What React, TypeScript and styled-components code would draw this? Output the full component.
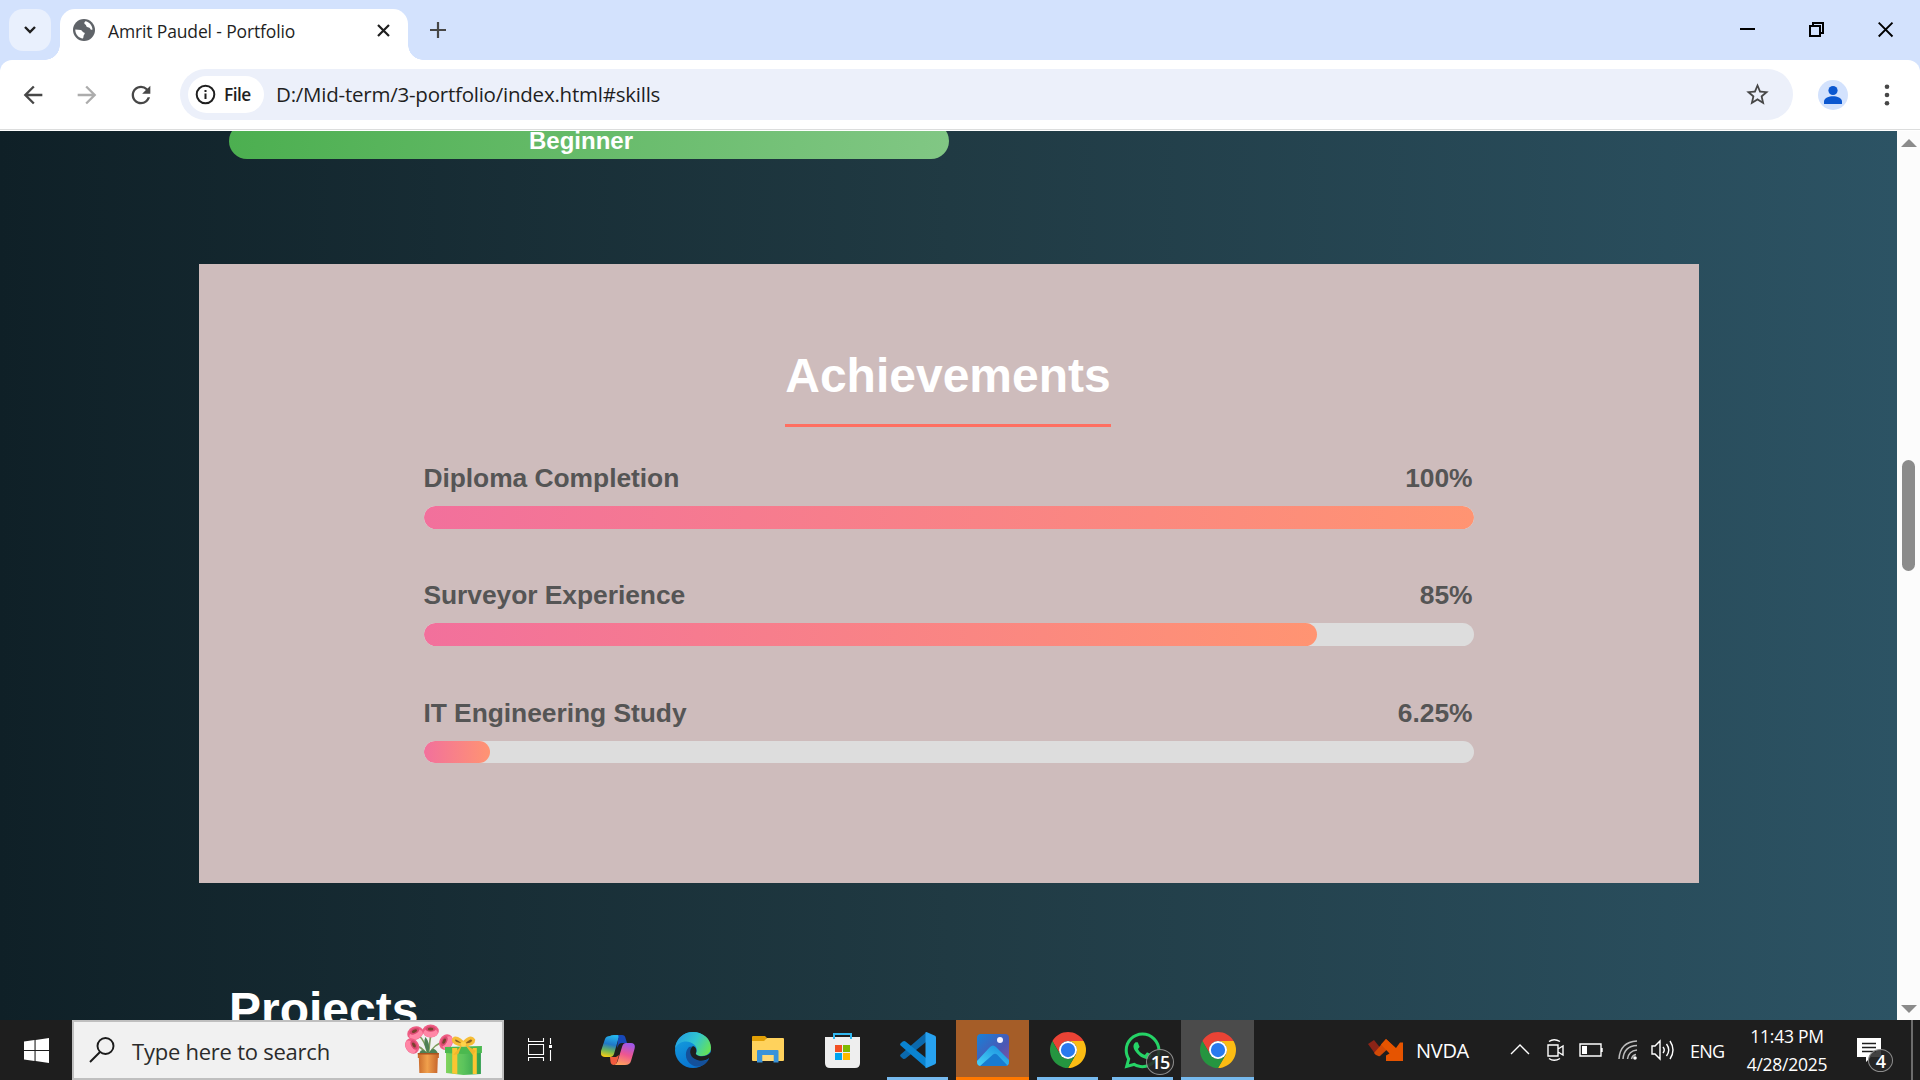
import React from "react";
import styled, { createGlobalStyle, css } from "styled-components";
import { MdArrowBack, MdArrowForward, MdRefresh, MdStarBorder } from "react-icons/md";
import { FaWhatsapp } from "react-icons/fa";

const GlobalStyle = createGlobalStyle`
  * { box-sizing: border-box; }
  html, body { margin: 0; padding: 0; }
  body { overflow: hidden; background: #1e1e1e; }
  svg { display: block; flex: none; }
`;

const ui = `"Segoe UI", "Open Sans", "Noto Sans", sans-serif`;
const arial = `Arial, "Liberation Sans", sans-serif`;

const Screen = styled.div`
  width: 1920px;
  height: 1080px;
  display: flex;
  flex-direction: column;
  overflow: hidden;
  font-family: ${ui};
`;

/* ---------- browser chrome ---------- */

const TabStrip = styled.header`
  height: 60px;
  flex: none;
  display: flex;
  background: #d3e2fd;
  padding: 9px 0 0 9px;
`;

const TabSearch = styled.button`
  width: 42px;
  height: 42px;
  border: 0;
  padding: 0;
  border-radius: 14px;
  background: #e9f0fd;
  display: grid;
  place-items: center;
`;

const Tab = styled.div`
  position: relative;
  width: 348px;
  height: 51px;
  margin-left: 9px;
  padding: 0 18px 9px 13px;
  display: flex;
  align-items: center;
  background: #fff;
  border-radius: 15px 15px 0 0;
  &::before,
  &::after {
    content: "";
    position: absolute;
    bottom: 0;
    width: 15px;
    height: 15px;
  }
  &::before {
    left: -15px;
    background: radial-gradient(circle at 0 0, transparent 14.5px, #fff 15px);
  }
  &::after {
    right: -15px;
    background: radial-gradient(circle at 100% 0, transparent 14.5px, #fff 15px);
  }
`;

const TabTitle = styled.span`
  flex: 1;
  margin-left: 13px;
  padding-top: 2px;
  font-size: 17.5px;
  line-height: 24px;
  letter-spacing: -0.14px;
  color: #1f1f1f;
  white-space: nowrap;
`;

const NewTab = styled.div`
  width: 60px;
  height: 42px;
  display: grid;
  place-items: center;
`;

const WindowControls = styled.div`
  margin-left: auto;
  padding: 13px 26px 0 0;
  display: flex;
  gap: 53px;
`;

const ToolbarBack = styled.div`
  height: 71px;
  flex: none;
  background: #d3e2fd;
`;

const Toolbar = styled.nav`
  height: 71px;
  padding: 9px 24px 11px 19px;
  display: flex;
  align-items: center;
  background: #fff;
  border-radius: 12px 12px 0 0;
  box-shadow: inset 0 -1px #fff, inset 0 -2px #dcdddd;
  color: #474747;
`;

const NavButtons = styled.div`
  width: 161px;
  flex: none;
  display: flex;
  gap: 26px;
  svg:nth-child(2) { color: #acacac; }
`;

const AddressBar = styled.div`
  width: 1613px;
  height: 51px;
  flex: none;
  padding: 0 22px 0 8px;
  display: flex;
  align-items: center;
  border-radius: 26px;
  background: #ecf0fa;
`;

const SiteChip = styled.div`
  width: 76px;
  height: 37px;
  padding-left: 7px;
  display: flex;
  align-items: center;
  gap: 8px;
  border-radius: 19px;
  background: #fff;
  color: #1f1f1f;
  font-size: 17.3px;
  font-weight: 600;
  letter-spacing: -0.55px;
`;

const Url = styled.span`
  flex: 1;
  margin: -2px 0 0 12px;
  font-size: 20.5px;
  line-height: 28px;
  letter-spacing: -0.23px;
  color: #1f1f1f;
`;

const Avatar = styled.div`
  width: 30px;
  height: 30px;
  margin: 0 auto 0 25px;
  border-radius: 50%;
  background: #d3e2fd;
`;

/* ---------- web page ---------- */

const Viewport = styled.main`
  height: 889px;
  flex: none;
  display: flex;
`;

const Page = styled.div`
  width: 1897px;
  height: 889px;
  overflow: hidden;
  display: flex;
  flex-direction: column;
  background: linear-gradient(90deg, #0f2027, #203a43, #2c5364);
  font-family: ${arial};
`;

const SkillBar = styled.div`
  width: 720px;
  height: 36px;
  flex: none;
  margin: -8px 0 0 229px;
  padding-right: 16px;
  border-radius: 18px;
  background: linear-gradient(90deg, #4caf50, #81c784);
  color: #fff;
  font-size: 24px;
  font-weight: 700;
  line-height: 36px;
  text-align: center;
`;

const Card = styled.section`
  width: 1500px;
  height: 619px;
  flex: none;
  margin: 105px 0 0 199px;
  padding: 84px 225px 0;
  display: flex;
  flex-direction: column;
  background: #cebcbc;
`;

const Heading = styled.h2`
  margin: 0;
  color: #fff;
  font-size: 48px;
  font-weight: 700;
  line-height: 55px;
`;

const CardHeading = styled(Heading)`
  height: 79px;
  align-self: center;
  margin-right: 2px;
  border-bottom: 3px solid #ff6f61;
`;

const ProgressList = styled.div`
  margin-top: 36px;
  display: flex;
  flex-direction: column;
`;

const ProgressItem = styled.div`
  height: 117.3px;
`;

const ProgressLabel = styled.div`
  display: flex;
  justify-content: space-between;
  height: 43px;
  padding-right: 1.5px;
  color: #555;
  font-size: 26.4px;
  font-weight: 700;
  line-height: 30px;
  letter-spacing: -0.04px;
  text-indent: -0.6px;
`;

const Track = styled.div`
  height: 22.5px;
  border-radius: 15px;
  overflow: hidden;
  background: #ddd;
`;

const Fill = styled.div`
  height: 100%;
  border-radius: 15px;
  background: linear-gradient(90deg, #f2709c, #ff9472);
`;

const PageHeading = styled(Heading)`
  margin: 99px 0 0 229px;
`;

const Scrollbar = styled.div`
  width: 23px;
  padding: 8px 4px 7px;
  display: flex;
  flex-direction: column;
  align-items: center;
  background: #fcfcfc;
`;

const Thumb = styled.div`
  width: 13px;
  height: 111px;
  margin: 313px 0 auto;
  border-radius: 7px;
  background: #8b8b8b;
`;

/* ---------- taskbar ---------- */

const Taskbar = styled.footer`
  height: 60px;
  flex: none;
  display: flex;
  background: #1e1e1e;
  color: #fff;
`;

const StartButton = styled.div`
  width: 72px;
  display: grid;
  place-items: center;
`;

const SearchBox = styled.div`
  width: 432px;
  height: 60px;
  padding: 0 17px 0 15px;
  display: flex;
  align-items: center;
  background: #f1f1f1;
  border: 2px solid #bfbfbf;
  color: #2b2b2b;
`;

const SearchHint = styled.span`
  flex: 1;
  margin-left: 17px;
  padding-top: 2px;
  font-size: 22px;
  line-height: 30px;
  letter-spacing: -0.24px;
`;

const Apps = styled.div`
  width: 750px;
  flex: none;
  display: flex;
  gap: 2px;
`;

const AppTile = styled.div<{ $mode?: "running" | "alert" | "active" }>`
  position: relative;
  width: 73px;
  height: 60px;
  flex: none;
  display: grid;
  place-items: center;
  &:nth-child(2) { margin-left: 2px; }
  ${(p) => p.$mode === "active" && css`background: #4b4b4b;`}
  ${(p) => p.$mode === "alert" && css`background: #a55d28;`}
  &::after {
    content: "";
    position: absolute;
    bottom: 0;
    height: 3px;
    left: ${(p) => (p.$mode === "running" ? "6px" : "0")};
    right: ${(p) => (p.$mode === "running" ? "6px" : "0")};
    background: ${(p) => (!p.$mode ? "transparent" : p.$mode === "alert" ? "#ff7800" : "#76b9ed")};
  }
`;

const Badge = styled.span<{ $size: number; $left: number; $top: number }>`
  position: absolute;
  left: ${(p) => p.$left}px;
  top: ${(p) => p.$top}px;
  width: ${(p) => p.$size}px;
  height: ${(p) => p.$size - 2}px;
  border: 1px solid #8d8d8d;
  border-radius: 50%;
  background: rgba(40, 40, 40, 0.88);
  display: flex;
  align-items: center;
  justify-content: center;
  color: #fff;
  font-size: 18px;
  font-weight: 600;
  letter-spacing: -1px;
  line-height: 1;
`;

const Tray = styled.div`
  flex: 1;
  display: flex;
  align-items: center;
  padding-left: 114px;
`;

const TrayText = styled.span<{ $w: number; $size: number; $ls: number; $ml: number }>`
  width: ${(p) => p.$w}px;
  margin-left: ${(p) => p.$ml}px;
  padding-top: 1px;
  font-size: ${(p) => p.$size}px;
  letter-spacing: ${(p) => p.$ls}px;
  line-height: 28px;
  white-space: nowrap;
`;

const TrayIcons = styled.div`
  display: flex;
  align-items: center;
  margin-left: 36px;
`;

const Clock = styled.div`
  width: 92px;
  margin-left: 16px;
  display: flex;
  flex-direction: column;
  align-items: center;
  font-size: 17.5px;
  line-height: 28px;
  letter-spacing: -0.25px;
  white-space: nowrap;
`;

const Notifications = styled.div`
  position: relative;
  width: 54px;
  height: 60px;
  margin-left: 24px;
  padding-top: 18px;
`;

const ShowDesktop = styled.div`
  width: 8px;
  height: 60px;
  border-left: 2px solid #6d6d6d;
`;

/* ---------- drawings ---------- */

const ChromeLogo = () => (
  <svg width="36" height="36" viewBox="-24 -24 48 48">
    <path d="M20.78-12H0A12 12 0 0 0-10.39 6L-20.78-12A24 24 0 0 1 20.78-12Z" fill="#ea4335" />
    <path d="M20.78-12H0A12 12 0 0 1 10.39 6L0 24A24 24 0 0 0 20.78-12Z" fill="#fbbc13" />
    <path d="M-20.78-12L-10.39 6A12 12 0 0 0 10.39 6L0 24A24 24 0 0 1-20.78-12Z" fill="#259540" />
    <circle r="12" fill="#fff" />
    <circle r="9.5" fill="#2979ee" />
  </svg>
);

const Globe = () => (
  <svg width="22" height="22" viewBox="0 0 22 22">
    <circle cx="11" cy="11" r="11" fill="#5f6368" />
    <path d="M12.3 2.2c4 .6 7 4 7.2 8.2-1 .8-2 .5-2.4-.8-.8-1.3-2-1.1-3-1.5-1.2-.6-.6-2.2-1.8-2.700-1.100-.4-1.500-1.800 0-3.200ZM2.300 10.500l5.500.5c1.500.1 1.500 2.300 3 2.600 1.300.2 1.200 1.500.3 2.100-.9.700-.3 2.400-1.100 3.800C5.400 19 2.200 15.200 2.300 10.500Z" fill="#fff" />
  </svg>
);

const WindowsLogo = () => (
  <svg width="25" height="25" viewBox="0 0 25 25" fill="#fff">
    <path d="M0 3.600L10.500 2.100V11.900H0ZM11.600 1.900L25 0V11.900H11.600ZM0 13H10.500V23L0 21.500ZM11.600 13H25V25L11.600 23.100Z" />
  </svg>
);

const Gifts = () => (
  <svg width="80" height="52" viewBox="0 0 78 52" preserveAspectRatio="none">
    <defs>
      <linearGradient id="pot"><stop offset="0" stopColor="#c8682a" /><stop offset=".45" stopColor="#f0a04c" /><stop offset="1" stopColor="#c4622a" /></linearGradient>
      <linearGradient id="box"><stop offset="0" stopColor="#7fd35c" /><stop offset=".5" stopColor="#5cc45c" /><stop offset="1" stopColor="#2d9c4c" /></linearGradient>
    </defs>
    <g fill="none" stroke="#7d9c5c" strokeWidth="1.6">
      <path d="M22 30Q20 17 13 11M23 30Q24 18 25 12M24 30Q28 20 38 18M21 30Q15 21 8 22" />
    </g>
    <path d="M14 29Q16 23 22 29Q17 18 20 13Q25 19 23 29Q28 21 32 29L27 31H18Z" fill="#4d8055" />
    {[[10, 9, -25], [25, 7, 0], [40, 18, -65], [7, 22, 60]].map(([x, y, r]) => (
      <g key={x} transform={`translate(${x} ${y}) rotate(${r})`}>
        <ellipse rx="8" ry="6.5" fill="#ee5d84" />
        <ellipse cy="1.8" rx="7" ry="4.4" fill="#ff86a6" />
        <ellipse cy="-2" rx="5" ry="2.8" fill="#d94970" />
        <ellipse cy="-2" rx="2.8" ry="1.5" fill="#78432f" />
      </g>
    ))}
    <path d="M12.5 29H33V34H32L31.5 49H14L13.500 34H12.500Z" fill="url(#pot)" />
    <path d="M12.5 29H33V30.500H12.500Z" fill="#a9531f" />
    <path d="M40 25H74V50L57 51L40 49Z" fill="url(#box)" />
    <path d="M39 23L75 22V29L57 30L39 29Z" fill="#4bb94f" />
    <path d="M46 24H51V50L46 49.500ZM66 24H70V50H66Z" fill="#fbc531" />
    <path d="M57 19Q50 12 47.500 15Q46 20 57 21Q67 21 67 16Q64 11 57 19Z" fill="#8a6222" stroke="#f6bd36" strokeWidth="3" strokeLinejoin="round" />
    <path d="M56 20L47 31L52 30ZM58 20L66 31L69 27Z" fill="#f2b62c" />
    <circle cx="57" cy="20" r="2.500" fill="#ffd24a" />
  </svg>
);

const TaskView = () => (
  <svg width="25" height="24" viewBox="0 0 25 24" fill="none" stroke="#fff" strokeWidth="1.1">
    <path d="M.5 0V3.500H15.500V0M.5 6.500H15.500V16.500H.5ZM.5 23V19.500H15.500V23M22.500 0V6M22.500 12V23" />
    <rect x="21" y="7" width="3" height="3" fill="#fff" stroke="none" />
  </svg>
);

const Copilot = () => (
  <svg width="34" height="31" viewBox="0 0 34 31">
    <defs>
      <linearGradient id="cpA" x1=".4" y1="0" x2=".2" y2="1"><stop offset="0" stopColor="#24b5ee" /><stop offset=".4" stopColor="#2178c8" /><stop offset=".7" stopColor="#6fb557" /><stop offset="1" stopColor="#ffcf10" /></linearGradient>
      <linearGradient id="cpB" x1=".6" y1="0" x2=".3" y2="1"><stop offset="0" stopColor="#a057e8" /><stop offset=".5" stopColor="#ee5690" /><stop offset="1" stopColor="#ffa35c" /></linearGradient>
    </defs>
    <path d="M9 1Q10 0 13 0H21Q18 1 17 5L13 19Q12 22 9 22H4Q-1 22 0 16L4 4Q5 1 9 1Z" fill="url(#cpA)" />
    <path d="M17 0H21Q24 0 24.500 3L26 8H21Q18 8 17 11L16 13L17 5Q18 1 17 0Z" fill="#1748b8" />
    <path d="M25 8H30Q35 8 33.500 14L30 26Q29 30 24 30H13Q16 29 17 25L21 12Q22 8 25 8Z" fill="url(#cpB)" />
    <path d="M9 22H15L18 20L16 27Q15 30 13 30Q10 30 9.500 27Z" fill="#f15a3e" />
  </svg>
);

const Edge = () => (
  <svg width="36" height="36" viewBox="0 0 36 36">
    <defs>
      <linearGradient id="edTop" x1="0" y1=".3" x2="1" y2=".7"><stop offset="0" stopColor="#249fe2" /><stop offset=".5" stopColor="#31c5d0" /><stop offset="1" stopColor="#68e352" /></linearGradient>
      <linearGradient id="edLeft" x1="0" y1="0" x2=".5" y2="1"><stop offset="0" stopColor="#16a4e0" /><stop offset="1" stopColor="#0872cf" /></linearGradient>
    </defs>
    <circle cx="18" cy="18" r="18" fill="url(#edLeft)" />
    <path d="M0 17C1 6 9 0 18 0C28 0 36 7 36 15.500C36 21 32 24 27 24C23 24 20.500 22.500 21 21C22.500 19 22 15 19 12.500C13 7 3 9 0 17Z" fill="url(#edTop)" />
    <path d="M14 15C9 20 10 29 17 33C24 37 31 33 34 27C30 30 24 29 20 26C16 23 15 18 17 14.500Z" fill="#14509a" />
    <path d="M18 14C14 17 14 24 20 27C25 30 31 29 34 26L36 27V20C33 24 28 25 24 24C21 23 20.500 22 21 21C22 18 21 15 18 14Z" fill="#1e1e1e" />
  </svg>
);

const Folder = () => (
  <svg width="32" height="28" viewBox="0 0 32 28">
    <path d="M0 1Q0 0 1 0H13L15 2L13 6H0Z" fill="#e2a006" />
    <path d="M0 5H12L15 2H31Q32 2 32 3V24Q32 25 31 25H1Q0 25 0 24Z" fill="#ffd25c" />
    <path d="M5 15Q5 14 6 14H25.500Q26.500 14 26.500 15V26.500H21.500V19H10.500V26.500H5Z" fill="#3a93da" />
    <path d="M10.500 19H21.500V25H10.500Z" fill="#ffd978" />
  </svg>
);

const Store = () => (
  <svg width="35" height="35" viewBox="0 0 35 35">
    <path d="M0 4H35V30Q35 35 30 35H5Q0 35 0 30Z" fill="#eeeeee" />
    <path d="M9 6V1H26V6" fill="none" stroke="#31b8f0" strokeWidth="2" />
    <path d="M10 12H17V19H10Z" fill="#f25022" />
    <path d="M18 12H25V19H18Z" fill="#7fba00" />
    <path d="M10 20H17V27H10Z" fill="#00a4ef" />
    <path d="M18 20H25V27H18Z" fill="#ffb900" />
  </svg>
);

const VsCode = () => (
  <svg width="36" height="36" viewBox="0 0 36 36">
    <path d="M.6 22.500L26 0.500V10L5.500 26.600Q4 27.600 2.700 26.400L.7 24.700Q-.4 23.500 .6 22.500Z" fill="#0b69ad" />
    <path d="M.6 13.500L26 35.500V26L5.500 9.400Q4 8.400 2.700 9.600L.7 11.300Q-.4 12.500 .6 13.500Z" fill="#0a83d0" />
    <path d="M25.500.3L26.500 0L35 3.800Q36 4.300 36 5.500V30.500Q36 31.700 35 32.200L26.500 36L25.500 35.700Z" fill="#27a2f0" />
  </svg>
);

const Photos = () => (
  <svg width="32" height="32" viewBox="0 0 32 32">
    <defs>
      <linearGradient id="phB" x1="0" y1="0" x2="1" y2="1"><stop offset="0" stopColor="#1781d8" /><stop offset=".6" stopColor="#4c57b4" /><stop offset="1" stopColor="#8754a0" /></linearGradient>
      <linearGradient id="phM" x1="0" y1="1" x2=".9" y2="0"><stop offset="0" stopColor="#49d3f8" /><stop offset="1" stopColor="#188ddd" /></linearGradient>
      <clipPath id="phC"><rect width="32" height="32" rx="4" /></clipPath>
    </defs>
    <g clipPath="url(#phC)">
      <rect width="32" height="32" fill="url(#phB)" />
      <path d="M0 27L13 13Q16 10 19 13L32 26V32H0Z" fill="url(#phM)" />
      <path d="M3 32L16 20.500Q18 19 20 20.500L31 32Z" fill="#187bd0" />
      <circle cx="23" cy="6" r="3" fill="#f3f0ff" />
    </g>
  </svg>
);

const Stock = () => (
  <svg width="36" height="22" viewBox="0 0 36 22">
    <path d="M0 5L6 1L14 11L8 16Z" fill="#8c2417" />
    <path d="M6 14L18 0L24 6L12 17Q9 18 6 14Z" fill="#d24a06" />
    <path d="M13 5.500L18 0L28 9L32 3.500H35V22H18V16.500L21.500 14.500Z" fill="#e65400" />
  </svg>
);

const thin = { fill: "none", stroke: "#fff", strokeWidth: 1.4 };

const SystemIcons = () => (
  <TrayIcons>
    <svg width="37" height="22" viewBox="0 0 37 22" {...thin}><path d="M2 15L11 6L20 15" /></svg>
    <svg width="33" height="24" viewBox="0 0 33 24" {...thin}><path d="M3 3.500Q8 0 14 3.500M3 20.500Q8 24 14 20.500M2 7H12V18H2ZM12 11L17 8V17L12 14" /></svg>
    <svg width="39" height="22" viewBox="0 0 39 22" {...thin}><path d="M1 5H22V17H1ZM23 9V13" /><path d="M3 7H8V15H3Z" fill="#fff" stroke="none" /></svg>
    <svg width="33" height="24" viewBox="0 0 33 24" fill="none" stroke="#bdbdbd" strokeWidth="1.5"><path d="M1 21Q2 4 19 3M5 21Q6 8 19 7.500M9.500 21Q10.500 13 19 12M13.500 21Q14.500 17 18 16.500" /><circle cx="17" cy="20" r="1.800" fill="#fff" stroke="none" /></svg>
    <svg width="25" height="24" viewBox="0 0 25 24" {...thin}><path d="M1 8H4L9 3V21L4 16H1ZM12 9Q14.500 12 12 15M15.500 6Q20 12 15.500 18M19 3Q25 12 19 21" /></svg>
  </TrayIcons>
);

const achievements = [
  { name: "Diploma Completion", value: 100 },
  { name: "Surveyor Experience", value: 85 },
  { name: "IT Engineering Study", value: 6.25 },
];

export default function App() {
  return (
    <Screen>
      <GlobalStyle />
      <TabStrip>
        <TabSearch aria-label="Search tabs">
          <svg width="14" height="10" viewBox="0 0 14 10" fill="none" stroke="#1f1f1f" strokeWidth="2.4"><path d="M2 2L7 7L12 2" /></svg>
        </TabSearch>
        <Tab>
          <Globe />
          <TabTitle>Amrit Paudel - Portfolio</TabTitle>
          <svg width="13" height="13" viewBox="0 0 13 13" stroke="#1f1f1f" strokeWidth="2.2"><path d="M1 1L12 12M12 1L1 12" /></svg>
        </Tab>
        <NewTab>
          <svg width="16" height="16" viewBox="0 0 16 16" stroke="#474747" strokeWidth="2.2"><path d="M8 0V16M0 8H16" /></svg>
        </NewTab>
        <WindowControls>
          <svg width="16" height="16" viewBox="0 0 16 16"><path d="M0 6H15V8H0Z" /></svg>
          <svg width="16" height="16" viewBox="0 0 16 16" fill="none" stroke="#000" strokeWidth="2"><path d="M1 4H11V14H1ZM4 4V1H14V11H11" /></svg>
          <svg width="16" height="16" viewBox="0 0 16 16" stroke="#000" strokeWidth="1.9"><path d="M.7.7L14.500 14.500M14.500.7L.7 14.500" /></svg>
        </WindowControls>
      </TabStrip>
      <ToolbarBack>
        <Toolbar>
          <NavButtons>
            <MdArrowBack size={28} />
            <MdArrowForward size={28} />
            <MdRefresh size={28} />
          </NavButtons>
          <AddressBar>
            <SiteChip>
              <svg width="21" height="21" viewBox="0 0 21 21" fill="none" stroke="#1f1f1f" strokeWidth="2"><circle cx="10.500" cy="10.500" r="8.800" /><path d="M10.500 9.500V15M10.500 6V8" /></svg>
              File
            </SiteChip>
            <Url>D:/Mid-term/3-portfolio/index.html#skills</Url>
            <MdStarBorder size={27} />
          </AddressBar>
          <Avatar>
            <svg width="30" height="30" viewBox="0 0 30 30" fill="#0b57d0"><circle cx="15" cy="10.500" r="4.600" /><path d="M6 24V21.500C6 18 11 16.300 15 16.300S24 18 24 21.500V24Z" /></svg>
          </Avatar>
          <svg width="18" height="22" viewBox="0 0 18 22" fill="#474747"><circle cx="9" cy="2.700" r="2.300" /><circle cx="9" cy="11" r="2.300" /><circle cx="9" cy="19.300" r="2.300" /></svg>
        </Toolbar>
      </ToolbarBack>

      <Viewport>
        <Page>
          <SkillBar>Beginner</SkillBar>
          <Card>
            <CardHeading>Achievements</CardHeading>
            <ProgressList>
              {achievements.map((a) => (
                <ProgressItem key={a.name}>
                  <ProgressLabel>
                    <span>{a.name}</span>
                    <span>{a.value}%</span>
                  </ProgressLabel>
                  <Track>
                    <Fill style={{ width: `${a.value}%` }} />
                  </Track>
                </ProgressItem>
              ))}
            </ProgressList>
          </Card>
          <PageHeading>Projects</PageHeading>
        </Page>
        <Scrollbar>
          <svg width="16" height="8" viewBox="0 0 16 8"><path d="M0 8L8 0L16 8Z" fill="#8b8b8b" /></svg>
          <Thumb />
          <svg width="16" height="8" viewBox="0 0 16 8"><path d="M0 0L8 8L16 0Z" fill="#8b8b8b" /></svg>
        </Scrollbar>
      </Viewport>

      <Taskbar>
        <StartButton><WindowsLogo /></StartButton>
        <SearchBox>
          <svg width="26" height="26" viewBox="0 0 26 26" fill="none" stroke="#1b1b1b" strokeWidth="1.9"><circle cx="16.500" cy="9" r="8" /><path d="M11 15L1 25" /></svg>
          <SearchHint>Type here to search</SearchHint>
          <Gifts />
        </SearchBox>
        <Apps>
          <AppTile><TaskView /></AppTile>
          <AppTile><Copilot /></AppTile>
          <AppTile><Edge /></AppTile>
          <AppTile><Folder /></AppTile>
          <AppTile><Store /></AppTile>
          <AppTile $mode="running"><VsCode /></AppTile>
          <AppTile $mode="alert"><Photos /></AppTile>
          <AppTile $mode="running"><ChromeLogo /></AppTile>
          <AppTile $mode="running">
            <FaWhatsapp size={41} color="#25d366" />
            <Badge $size={28} $left={40} $top={29}>15</Badge>
          </AppTile>
          <AppTile $mode="active"><ChromeLogo /></AppTile>
        </Apps>
        <Tray>
          <Stock />
          <TrayText $w={57} $size={20} $ls={-0.3} $ml={12}>NVDA</TrayText>
          <SystemIcons />
          <TrayText $w={35} $size={18} $ls={-0.8} $ml={14}>ENG</TrayText>
          <Clock>
            <span>11:43 PM</span>
            <span>4/28/2025</span>
          </Clock>
          <Notifications>
            <svg width="24" height="25" viewBox="0 0 24 25"><path d="M0 0H24V19H14L9 24V19H0Z" fill="#fff" /><path d="M5 5.500H19M5 9.500H19M5 13.500H19" stroke="#1e1e1e" strokeWidth="1.3" /></svg>
            <Badge $size={25} $left={11} $top={29}>4</Badge>
          </Notifications>
          <ShowDesktop />
        </Tray>
      </Taskbar>
    </Screen>
  );
}
